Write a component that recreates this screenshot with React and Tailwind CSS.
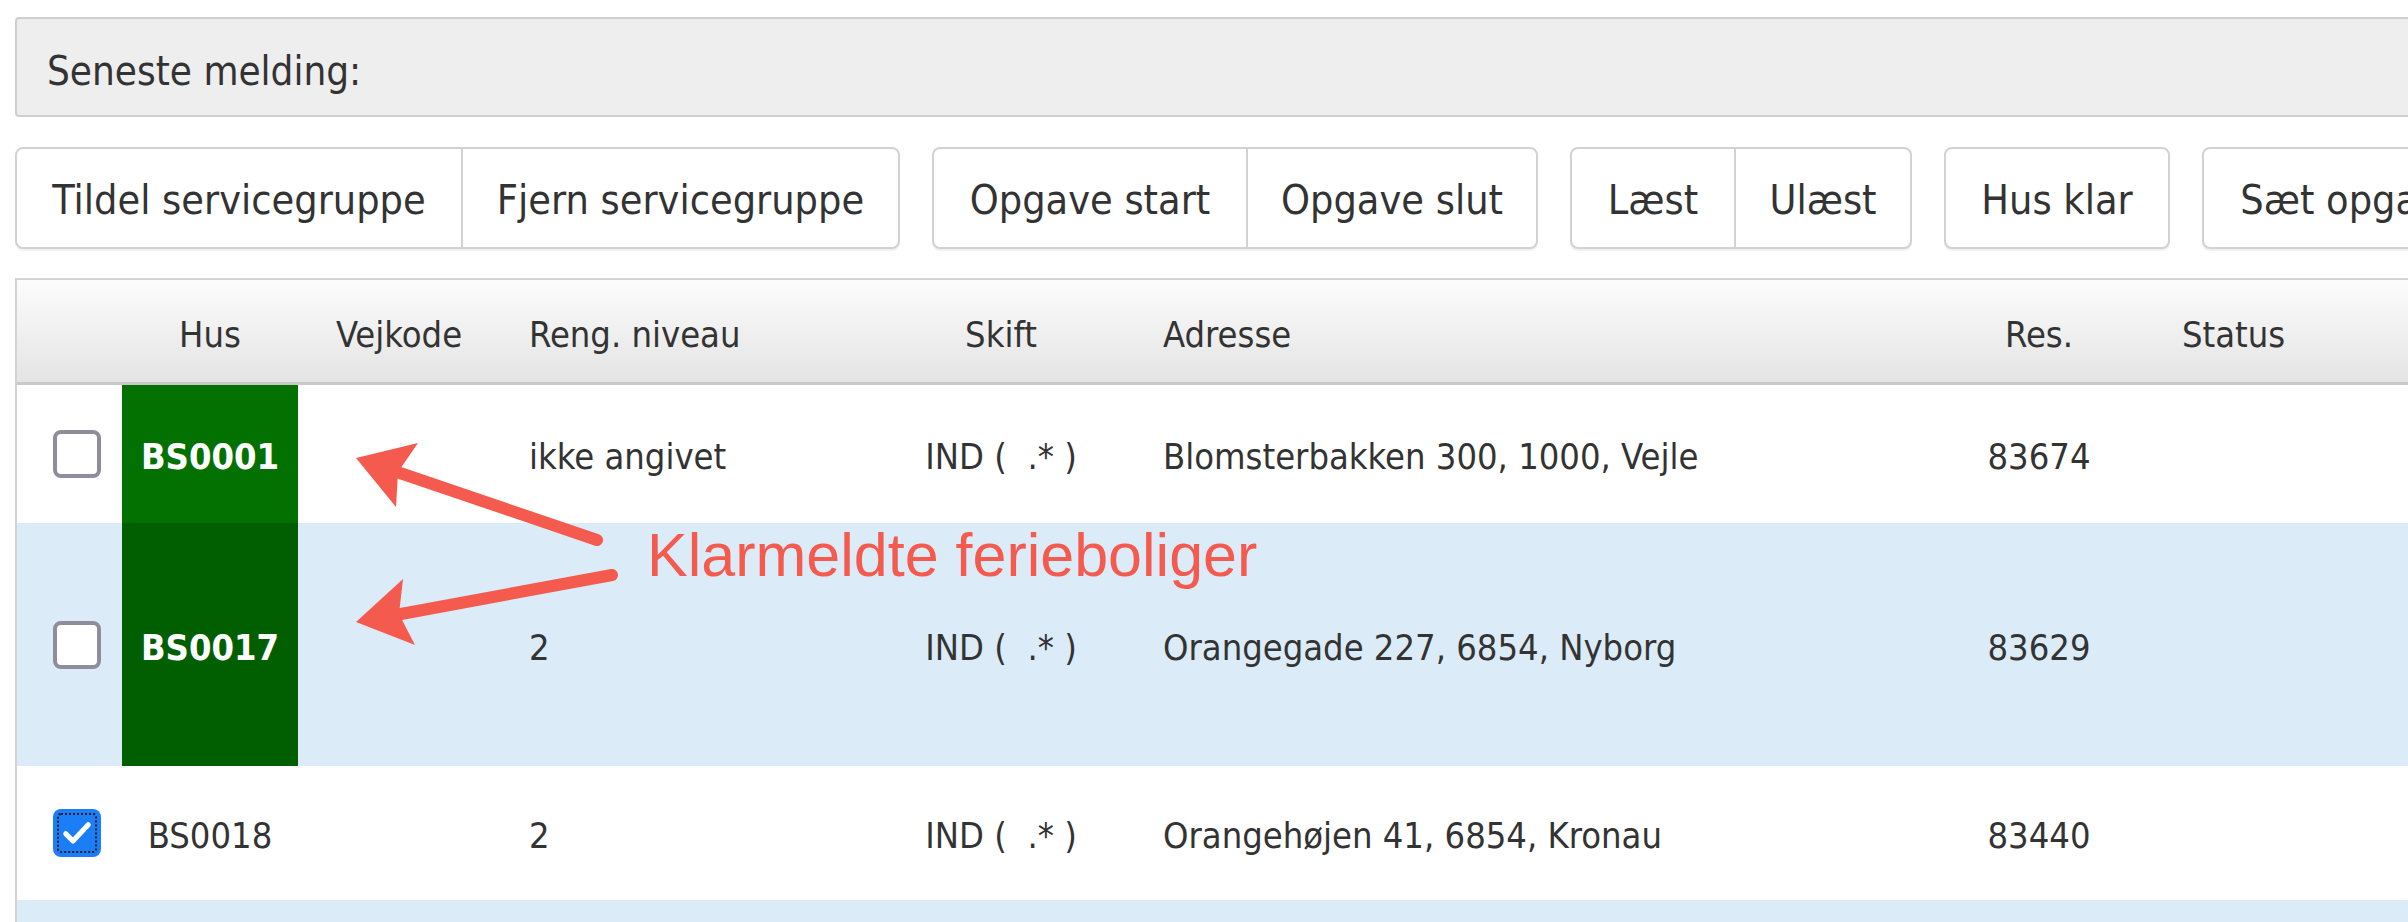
import { Fragment } from "react";

const font = "font-['DejaVu_Sans_Condensed','DejaVu_Sans',sans-serif] font-stretch-condensed";

// widths include the divider border (border-box), so each group lands on the reference grid
const groups = [
  [
    ["Tildel servicegruppe", "w-[444px]"],
    ["Fjern servicegruppe", "w-[437px]"],
  ],
  [
    ["Opgave start", "w-[312px]"],
    ["Opgave slut", "w-[290px]"],
  ],
  [
    ["Læst", "w-[162px]"],
    ["Ulæst", "w-[176px]"],
  ],
  [["Hus klar", "w-[222px]"]],
  [["Sæt opgave status", "w-[420px]"]],
];

const rows = [
  {
    hus: "BS0001",
    green: "bg-[#027102]",
    reng: "ikke angivet",
    adr: "Blomsterbakken 300, 1000, Vejle",
    res: "83674",
    h: "h-[138px]",
    bg: "bg-white",
  },
  {
    hus: "BS0017",
    green: "bg-[#015f01]",
    reng: "2",
    adr: "Orangegade 227, 6854, Nyborg",
    res: "83629",
    h: "h-[243px]",
    bg: "bg-[#dcebf8]",
  },
  {
    hus: "BS0018",
    checked: true,
    reng: "2",
    adr: "Orangehøjen 41, 6854, Kronau",
    res: "83440",
    h: "h-[134px]",
    bg: "bg-white",
  },
];

const cols = "grid grid-cols-[105px_176px_212px_400px_182px_858px_178px_1fr]";

function Checkbox({ checked }) {
  if (checked) {
    return (
      <div className="flex h-[48px] w-[48px] items-center justify-center rounded-[8px] bg-[#1a7ff6] outline-2 outline-dotted outline-offset-[-6px] outline-[#1b1b2b]">
        <svg width="36" height="36" viewBox="0 0 24 24" fill="none">
          <path d="M4.5 12.5l4.8 4.8L19.5 6.5" stroke="white" strokeWidth="3.4" strokeLinecap="round" strokeLinejoin="round" />
        </svg>
      </div>
    );
  }
  return <div className="h-[48px] w-[48px] rounded-[8px] border-[4px] border-[#8f8c9b] bg-white" />;
}

export default function App() {
  return (
    <div className={`relative h-[922px] w-[2408px] overflow-hidden bg-white text-[#333] ${font}`}>
      <div className="w-[2460px] pl-[15px] pt-[17px]">
        <div className="flex h-[100px] items-center rounded-[4px] border-2 border-[#cfcfcf] bg-[#eeeeee] pl-[30px] pt-[8px] text-[40px]">
          Seneste melding:
        </div>

        <div className="mt-[30px] flex gap-[32px]">
          {groups.map((g, gi) => (
            <div key={gi} className="flex h-[102px] shrink-0 rounded-[8px] border-2 border-[#d2d2d2] bg-white shadow-[0_2px_1px_rgba(0,0,0,0.06)]">
              {g.map(([label, w], bi) => (
                <div
                  key={label}
                  className={`flex items-center justify-center whitespace-nowrap pt-[6px] text-[41px] ${w} ${bi > 0 ? "border-l-2 border-[#d2d2d2]" : ""}`}
                >
                  {label}
                </div>
              ))}
            </div>
          ))}
        </div>

        <div className="mt-[29px] border-l-2 border-t-2 border-[#d3d3d3] text-[36px]">
          <div className={`${cols} h-[105px] items-center border-b-[3px] border-[#c9c9c9] bg-gradient-to-b from-[#fcfcfc] to-[#e4e4e4] pt-[8px]`}>
            <div />
            <div className="text-center">Hus</div>
            <div className="pl-[38px]">Vejkode</div>
            <div className="pl-[19px]">Reng. niveau</div>
            <div className="text-center">Skift</div>
            <div className="pl-[71px]">Adresse</div>
            <div className="text-center">Res.</div>
            <div className="pl-[54px]">Status</div>
          </div>

          {rows.map((r) => (
            <div key={r.hus} className={`${cols} ${r.h} ${r.bg} items-center`}>
              <div className="pl-[36px]">
                <Checkbox checked={r.checked} />
              </div>
              {r.green ? (
                <div className={`flex h-full items-center justify-center pt-[6px] font-bold text-white ${r.green}`}>{r.hus}</div>
              ) : (
                <div className="pt-[6px] text-center">{r.hus}</div>
              )}
              <div />
              <div className="pl-[19px] pt-[6px]">{r.reng}</div>
              <div className="whitespace-pre pt-[6px] text-center">{"IND (  .* )"}</div>
              <div className="pl-[71px] pt-[6px]">{r.adr}</div>
              <div className="pt-[6px] text-center">{r.res}</div>
              <div />
            </div>
          ))}
          <div className={`${cols} h-[134px] bg-[#dcebf8]`} />
        </div>
      </div>

      <svg className="pointer-events-none absolute left-0 top-0" width="2408" height="922">
        <line x1="597" y1="540" x2="400" y2="473" stroke="#f55a4e" strokeWidth="12" strokeLinecap="round" />
        <polygon points="356,458 418,443 398,472 396,507" fill="#f55a4e" />
        <line x1="612" y1="575" x2="401" y2="614" stroke="#f55a4e" strokeWidth="12" strokeLinecap="round" />
        <polygon points="356,622 403,579 399,614 415,645" fill="#f55a4e" />
      </svg>
      <div className="pointer-events-none absolute left-[647px] top-[525px] whitespace-nowrap font-['Liberation_Sans',Arial,sans-serif] text-[61px] leading-none text-[#f55a4e]">
        Klarmeldte ferieboliger
      </div>
    </div>
  );
}
